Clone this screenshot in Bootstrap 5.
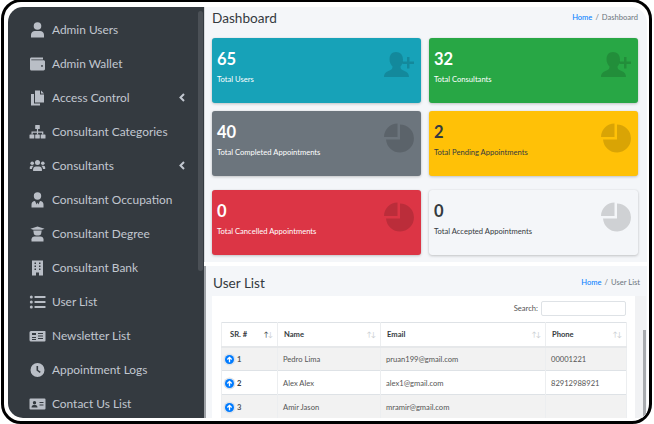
<!DOCTYPE html>
<html lang="en">
<head>
<meta charset="utf-8">
<title>Dashboard</title>
<link rel="stylesheet" href="https://cdn.jsdelivr.net/npm/bootstrap@5.3.0/dist/css/bootstrap.min.css">
<style>
html,body{margin:0;height:424px;width:654px;overflow:hidden;background:#fff;font-family:"Lato","Liberation Sans",sans-serif}
.shell{width:651px;height:425px;margin:-1px 0 0 1px;border:3px solid #000;border-radius:20px;background:#fff;padding:5px 2px 3px 4px;overflow:hidden}
.side{width:196px;flex:none;background:#343a40;border-radius:15px 0 0 15px;position:relative;overflow:hidden;padding-top:6px}
.side-thumb{position:absolute;right:1px;top:4px;width:5px;height:260px;border-radius:3px;background:#4b5056}
.side-item{height:34px;display:flex;align-items:center;color:#c2c7d0;font-size:11.9px;text-decoration:none;padding-left:21px;position:relative}
.side-item svg.ic{width:17px;height:16px;flex:none;margin-right:6px;fill:#b9bec6}
.side-chev{position:absolute;left:170px;top:12px;width:8px;height:9px;fill:none;stroke:#c2c7d0;stroke-width:2}
.main{flex:1;min-width:0;overflow:hidden;background:#fff;border-top-right-radius:16px}
.sec-top{height:178px;background:#f4f6f9;padding:0 9px 0 7px;border-left:1px solid #d6d8db}
.sec-mid{height:77px;margin-top:0;background:#f4f6f9;padding:5px 9px 0 7px;border-left:1px solid #d6d8db}
.sec-low{height:152px;margin-top:4px;background:#f4f6f9;padding:0 0 0 6px;border-left:2px solid #9da1a6;position:relative;overflow:hidden}
.head-row{height:31px;padding-top:2px}
.page-title{font-size:13.6px;line-height:18px;font-weight:400;color:#343a40;margin:0}
.crumb{margin:0;padding:3px 0 0;font-size:7.6px;line-height:10px;list-style:none;color:#6c757d;display:flex;gap:3px}
.crumb a{color:#007bff;text-decoration:none}
.tile{height:65px;border-radius:3px;box-shadow:0 0 1px rgba(0,0,0,.125),0 1px 3px rgba(0,0,0,.2);padding:9px 5px;position:relative;overflow:hidden}
.tile b{display:block;font-size:16.5px;line-height:24px;font-weight:700}
.tile span{display:block;font-size:7.6px;margin-top:3px;line-height:11px}
.tile svg{position:absolute;right:7px;top:11px;width:30px;height:32px;fill:rgba(0,0,0,.15)}
.t-info{background:#17a2b8;color:#fff}
.t-good{background:#28a745;color:#fff}
.t-gray{background:#6c757d;color:#fff}
.t-warn{background:#ffc107;color:#343a40}
.t-bad{background:#dc3545;color:#fff}
.t-pale{background:#f4f6f9;color:#343a40}
.low-head{height:30px;padding:8px 7px 0 0;position:relative;z-index:1}
.low-head .page-title{padding-left:1px}
.sheet{width:423px;height:130px;background:#fff;padding:4px 9px 0 9px;overflow:hidden;position:relative;z-index:1}
.search-row{height:22px;font-size:7.6px;color:#555;padding-bottom:5px}
.search-box{width:85px;height:15px;border:1px solid #dee2e6;border-radius:2px;background:#fff;margin-left:3px}
.sheet table{width:405px;table-layout:fixed;font-size:7.6px;margin:0;color:#555;--bs-table-striped-bg:#f2f2f2;--bs-table-striped-color:#555;--bs-table-color:#555}
.sheet th,.sheet td{height:24px;padding:0 5px;vertical-align:middle;border-color:#eceef0;line-height:10px}
.sheet thead th{color:#343a40;font-weight:700;padding-left:6px;position:relative;border-bottom:2px solid #e6e8ea}
.sheet thead th:first-child{padding-left:8px}
.sort{position:absolute;right:5px;top:6px;font-size:7px;letter-spacing:-1px;color:#c8ccd0;font-weight:400}
.sort i{font-style:normal;color:#343a40}
.sheet td.sr{font-weight:700;color:#343a40;padding-left:3px}
.toggle{display:inline-flex;width:9px;height:9px;border-radius:50%;background:#007bff;box-shadow:0 0 0 1.5px #dde3ea;margin-right:3px;vertical-align:-1px;align-items:center;justify-content:center}
.toggle svg{width:7px;height:7px;fill:none;stroke:#fff;stroke-width:1.5}
.low-track{position:absolute;left:429px;top:30px;bottom:0;width:11px;background:#f1f2f4}
.low-thumb{position:absolute;left:437px;top:64px;bottom:0;width:3px;background:#a8abaf}
</style>
</head>
<body>
<div class="shell d-flex">
  <nav class="side">
    <a class="side-item" href="#"><svg class="ic" viewBox="0 0 16 16"><circle cx="8" cy="4" r="3.8"/><path d="M1.5 15.5v-2.700c0-2.400 2-3.800 3.800-3.800h5.400c1.800 0 3.800 1.400 3.800 3.800v2.700z"/></svg>Admin Users</a>
    <a class="side-item" href="#"><svg class="ic" viewBox="0 0 16 16"><path fill-rule="evenodd" d="M2 1.500h11.500v2H2.200c-.6 0-.6.8 0 .8H14c.8 0 1.500.6 1.500 1.400v7.400c0 .8-.7 1.400-1.500 1.400H2c-1 0-1.500-.7-1.500-1.500V3C.5 2.200 1.100 1.500 2 1.500zM12.500 9a.9.9 0 1 0 0 1.800.9.9 0 0 0 0-1.800z"/></svg>Admin Wallet</a>
    <a class="side-item" href="#"><svg class="ic" viewBox="0 0 16 16"><path d="M5.500.5h5v4h4v8h-9z"/><path d="M11.500.5l3 3h-3z"/><path d="M1.500 4h3v9.500h6v2h-9z"/></svg>Access Control<svg class="side-chev" viewBox="0 0 8 9"><path d="M6 1L2.500 4.500 6 8"/></svg></a>
    <a class="side-item" href="#"><svg class="ic" viewBox="0 0 16 16"><rect x="5.700" y="1" width="4.600" height="4" rx=".6"/><path d="M7.400 5h1.200v2.500h5.200v3h-1.200V8.700H8.600v1.800H7.400V8.700H3.200v1.800H2v-3h5.400z"/><rect x="0" y="10.500" width="4.800" height="4" rx=".6"/><rect x="5.700" y="10.500" width="4.600" height="4" rx=".6"/><rect x="11.200" y="10.500" width="4.800" height="4" rx=".6"/></svg>Consultant Categories</a>
    <a class="side-item" href="#"><svg class="ic" viewBox="0 0 16 16"><circle cx="2.700" cy="5.300" r="1.800"/><circle cx="13.300" cy="5.300" r="1.800"/><circle cx="8" cy="4.500" r="2.500"/><path d="M.3 11V9.500c0-1 .7-1.800 1.700-1.800h1.300c.3 0 .6.100.8.300-.9.700-1.500 1.700-1.600 3z"/><path d="M15.700 11V9.500c0-1-.7-1.800-1.700-1.800h-1.300c-.3 0-.6.100-.8.300.9.700 1.500 1.700 1.600 3z"/><path d="M3.600 13v-1.500c0-1.800 1.300-3 2.800-3h3.200c1.500 0 2.800 1.200 2.800 3V13z"/></svg>Consultants<svg class="side-chev" viewBox="0 0 8 9"><path d="M6 1L2.500 4.500 6 8"/></svg></a>
    <a class="side-item" href="#"><svg class="ic" viewBox="0 0 16 16"><circle cx="8" cy="4" r="3.700"/><path d="M2 15.500v-3c0-2 1.400-3.500 3.500-3.500l1.700 3.500.8-2 .8 2L10.500 9c2.100 0 3.500 1.500 3.500 3.500v3z"/></svg>Consultant Occupation</a>
    <a class="side-item" href="#"><svg class="ic" viewBox="0 0 16 16"><path d="M8 .5l7 2.300-2.600.9H3.600L1 2.800z"/><path d="M3.800 4.500h8.400l-.6 3.500c-.5 1-2 1.500-3.600 1.500S4.900 9 4.400 8z"/><path d="M2 15.500v-2.200c0-1.600 1.300-2.800 3-2.800h6c1.700 0 3 1.200 3 2.800v2.200z"/></svg>Consultant Degree</a>
    <a class="side-item" href="#"><svg class="ic" viewBox="0 0 16 16"><path fill-rule="evenodd" d="M2.500.5h11v15H9.500v-3h-3v3h-4zM5 2.500v1.500h1.500V2.500zm4.500 0v1.500H11V2.500zM5 5.500V7h1.500V5.500zm4.500 0V7H11V5.500zM5 8.500V10h1.500V8.500zm4.500 0V10H11V8.500z"/></svg>Consultant Bank</a>
    <a class="side-item" href="#"><svg class="ic" viewBox="0 0 16 16"><circle cx="1.800" cy="3" r="1.500"/><circle cx="1.800" cy="8" r="1.500"/><circle cx="1.800" cy="13" r="1.500"/><rect x="5" y="2" width="11" height="2" rx=".5"/><rect x="5" y="7" width="11" height="2" rx=".5"/><rect x="5" y="12" width="11" height="2" rx=".5"/></svg>User List</a>
    <a class="side-item" href="#"><svg class="ic" viewBox="0 0 16 16"><path fill-rule="evenodd" d="M1.500 3h14a.5.5 0 0 1 .5.5v9a1 1 0 0 1-1 1H1.500A1.500 1.500 0 0 1 0 12V4.500A1.500 1.500 0 0 1 1.500 3zM2.500 5v2h4V5zm6 0v1h5V5zm0 2.500v1h5v-1zM2.500 9v1h4V9zm6 1v1h5v-1zm-6 1v1h4v-1z"/></svg>Newsletter List</a>
    <a class="side-item" href="#"><svg class="ic" viewBox="0 0 16 16"><path fill-rule="evenodd" d="M8 1a7 7 0 1 1 0 14A7 7 0 0 1 8 1zM7 4v4.600l3.300 2.300.9-1.200L8.600 7.900V4z"/></svg>Appointment Logs</a>
    <a class="side-item" href="#"><svg class="ic" viewBox="0 0 16 16"><path fill-rule="evenodd" d="M1 2.500h14a1 1 0 0 1 1 1v9a1 1 0 0 1-1 1H1a1 1 0 0 1-1-1v-9a1 1 0 0 1 1-1zM5 5a1.700 1.700 0 1 0 0 3.400A1.700 1.700 0 0 0 5 5zM2 11.500h6c0-1.500-1-2.500-2-2.500H4c-1 0-2 1-2 2.500zM10 6v1h4V6zm0 2.500v1h4v-1z"/></svg>Contact Us List</a>
    <div class="side-thumb"></div>
  </nav>
  <main class="main">
    <section class="sec-top">
      <div class="head-row d-flex justify-content-between align-items-start">
        <h1 class="page-title">Dashboard</h1>
        <ol class="crumb"><li><a href="#">Home</a></li><li>/</li><li>Dashboard</li></ol>
      </div>
      <div class="row row-cols-2 g-2">
        <div class="col"><div class="tile t-info"><b>65</b><span>Total Users</span><svg viewBox="0 0 30 32"><path d="M12 3c4.500 0 7 3 7 7.500 0 3-1 5.500-2.500 7 0 2 .7 3 3 4 3 1.200 5.500 2.500 5.500 6.500H0c0-4 2.500-5.300 5.500-6.500 2.300-1 3-2 3-4C7 16 5.500 13.500 5.500 10.500 5.500 6 7.500 3 12 3z"/><path d="M23 8h2.500v4.500H30v2.500h-4.500v4.500H23V15h-4.500v-2.500H23z"/></svg></div></div>
        <div class="col"><div class="tile t-good"><b>32</b><span>Total Consultants</span><svg viewBox="0 0 30 32"><path d="M12 3c4.500 0 7 3 7 7.500 0 3-1 5.500-2.500 7 0 2 .7 3 3 4 3 1.200 5.500 2.500 5.500 6.500H0c0-4 2.500-5.300 5.500-6.500 2.300-1 3-2 3-4C7 16 5.500 13.500 5.500 10.500 5.500 6 7.500 3 12 3z"/><path d="M23 8h2.500v4.500H30v2.500h-4.500v4.500H23V15h-4.500v-2.500H23z"/></svg></div></div>
        <div class="col"><div class="tile t-gray"><b>40</b><span>Total Completed Appointments</span><svg viewBox="0 0 30 32"><path d="M13.500 1.500v13.500H0C0 7.500 6 1.500 13.500 1.500z"/><path d="M16 2.500a14 14 0 1 1-14 15h14z"/></svg></div></div>
        <div class="col"><div class="tile t-warn"><b>2</b><span>Total Pending Appointments</span><svg viewBox="0 0 30 32"><path d="M13.500 1.500v13.500H0C0 7.500 6 1.500 13.500 1.500z"/><path d="M16 2.500a14 14 0 1 1-14 15h14z"/></svg></div></div>
      </div>
    </section>
    <section class="sec-mid">
      <div class="row row-cols-2 g-2">
        <div class="col"><div class="tile t-bad"><b>0</b><span>Total Cancelled Appointments</span><svg viewBox="0 0 30 32"><path d="M13.500 1.500v13.500H0C0 7.500 6 1.500 13.500 1.500z"/><path d="M16 2.500a14 14 0 1 1-14 15h14z"/></svg></div></div>
        <div class="col"><div class="tile t-pale"><b>0</b><span>Total Accepted Appointments</span><svg viewBox="0 0 30 32"><path d="M13.500 1.500v13.500H0C0 7.500 6 1.500 13.500 1.500z"/><path d="M16 2.500a14 14 0 1 1-14 15h14z"/></svg></div></div>
      </div>
    </section>
    <section class="sec-low">
      <div class="low-head d-flex justify-content-between align-items-start">
        <h2 class="page-title">User List</h2>
        <ol class="crumb"><li><a href="#">Home</a></li><li>/</li><li>User List</li></ol>
      </div>
      <div class="sheet">
        <div class="search-row d-flex justify-content-end align-items-center">Search: <div class="search-box"></div></div>
        <table class="table table-bordered table-striped">
          <colgroup><col style="width:56px"><col style="width:103px"><col style="width:165px"><col style="width:81px"></colgroup>
          <thead><tr><th>SR. #<span class="sort"><i>↑</i>↓</span></th><th>Name<span class="sort">↑↓</span></th><th>Email<span class="sort">↑↓</span></th><th>Phone<span class="sort">↑↓</span></th></tr></thead>
          <tbody>
            <tr><td class="sr"><span class="toggle"><svg viewBox="0 0 8 8"><path d="M4 7V1.500M1.500 4L4 1.500 6.500 4"/></svg></span>1</td><td>Pedro Lima</td><td>pruan199@gmail.com</td><td>00001221</td></tr>
            <tr><td class="sr"><span class="toggle"><svg viewBox="0 0 8 8"><path d="M4 7V1.500M1.500 4L4 1.500 6.500 4"/></svg></span>2</td><td>Alex Alex</td><td>alex1@gmail.com</td><td>82912988921</td></tr>
            <tr><td class="sr"><span class="toggle"><svg viewBox="0 0 8 8"><path d="M4 7V1.500M1.500 4L4 1.500 6.500 4"/></svg></span>3</td><td>Amir Jason</td><td>mramir@gmail.com</td><td></td></tr>
          </tbody>
        </table>
      </div>
      <div class="low-track"></div>
      <div class="low-thumb"></div>
    </section>
  </main>
</div>
<script src="https://cdn.jsdelivr.net/npm/bootstrap@5.3.0/dist/js/bootstrap.bundle.min.js"></script>
</body>
</html>
